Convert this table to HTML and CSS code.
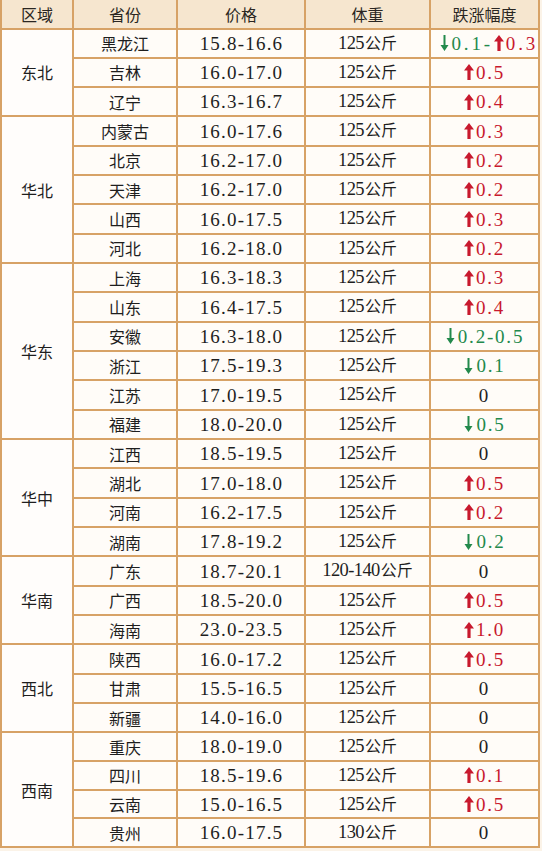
FILE: index.html
```html
<!DOCTYPE html>
<html lang="zh-CN">
<head>
<meta charset="utf-8">
<title>生猪价格</title>
<link rel="stylesheet" href="styles.css">
</head>
<body>
<div class="sheet">
  <div class="cell head">区域</div>
  <div class="cell head">省份</div>
  <div class="cell head">价格</div>
  <div class="cell head">体重</div>
  <div class="cell head">跌涨幅度</div>

  <div class="cell region span3">东北</div>
  <div class="cell prov">黑龙江</div><div class="cell num">15.8-16.6</div><div class="cell wt"><span class="n">125</span>公斤</div>
  <div class="cell chg wide"><span class="dn"><svg viewBox="0 0 10 16"><path d="M4 0h2v10h3L5 16L1 10h3z"/></svg>0.1-</span><span class="up"><svg viewBox="0 0 10 16"><path d="M5 0L10 6.5H6.6V16H3.4V6.5H0z"/></svg>0.3</span></div>
  <div class="cell prov">吉林</div><div class="cell num">16.0-17.0</div><div class="cell wt"><span class="n">125</span>公斤</div>
  <div class="cell chg"><span class="up"><svg viewBox="0 0 10 16"><path d="M5 0L10 6.5H6.6V16H3.4V6.5H0z"/></svg>0.5</span></div>
  <div class="cell prov">辽宁</div><div class="cell num">16.3-16.7</div><div class="cell wt"><span class="n">125</span>公斤</div>
  <div class="cell chg"><span class="up"><svg viewBox="0 0 10 16"><path d="M5 0L10 6.5H6.6V16H3.4V6.5H0z"/></svg>0.4</span></div>

  <div class="cell region span5">华北</div>
  <div class="cell prov">内蒙古</div><div class="cell num">16.0-17.6</div><div class="cell wt"><span class="n">125</span>公斤</div>
  <div class="cell chg"><span class="up"><svg viewBox="0 0 10 16"><path d="M5 0L10 6.5H6.6V16H3.4V6.5H0z"/></svg>0.3</span></div>
  <div class="cell prov">北京</div><div class="cell num">16.2-17.0</div><div class="cell wt"><span class="n">125</span>公斤</div>
  <div class="cell chg"><span class="up"><svg viewBox="0 0 10 16"><path d="M5 0L10 6.5H6.6V16H3.4V6.5H0z"/></svg>0.2</span></div>
  <div class="cell prov">天津</div><div class="cell num">16.2-17.0</div><div class="cell wt"><span class="n">125</span>公斤</div>
  <div class="cell chg"><span class="up"><svg viewBox="0 0 10 16"><path d="M5 0L10 6.5H6.6V16H3.4V6.5H0z"/></svg>0.2</span></div>
  <div class="cell prov">山西</div><div class="cell num">16.0-17.5</div><div class="cell wt"><span class="n">125</span>公斤</div>
  <div class="cell chg"><span class="up"><svg viewBox="0 0 10 16"><path d="M5 0L10 6.5H6.6V16H3.4V6.5H0z"/></svg>0.3</span></div>
  <div class="cell prov">河北</div><div class="cell num">16.2-18.0</div><div class="cell wt"><span class="n">125</span>公斤</div>
  <div class="cell chg"><span class="up"><svg viewBox="0 0 10 16"><path d="M5 0L10 6.5H6.6V16H3.4V6.5H0z"/></svg>0.2</span></div>

  <div class="cell region span6">华东</div>
  <div class="cell prov">上海</div><div class="cell num">16.3-18.3</div><div class="cell wt"><span class="n">125</span>公斤</div>
  <div class="cell chg"><span class="up"><svg viewBox="0 0 10 16"><path d="M5 0L10 6.5H6.6V16H3.4V6.5H0z"/></svg>0.3</span></div>
  <div class="cell prov">山东</div><div class="cell num">16.4-17.5</div><div class="cell wt"><span class="n">125</span>公斤</div>
  <div class="cell chg"><span class="up"><svg viewBox="0 0 10 16"><path d="M5 0L10 6.5H6.6V16H3.4V6.5H0z"/></svg>0.4</span></div>
  <div class="cell prov">安徽</div><div class="cell num">16.3-18.0</div><div class="cell wt"><span class="n">125</span>公斤</div>
  <div class="cell chg"><span class="dn"><svg viewBox="0 0 10 16"><path d="M4 0h2v10h3L5 16L1 10h3z"/></svg>0.2-0.5</span></div>
  <div class="cell prov">浙江</div><div class="cell num">17.5-19.3</div><div class="cell wt"><span class="n">125</span>公斤</div>
  <div class="cell chg"><span class="dn"><svg viewBox="0 0 10 16"><path d="M4 0h2v10h3L5 16L1 10h3z"/></svg>0.1</span></div>
  <div class="cell prov">江苏</div><div class="cell num">17.0-19.5</div><div class="cell wt"><span class="n">125</span>公斤</div>
  <div class="cell chg"><span class="zero">0</span></div>
  <div class="cell prov">福建</div><div class="cell num">18.0-20.0</div><div class="cell wt"><span class="n">125</span>公斤</div>
  <div class="cell chg"><span class="dn"><svg viewBox="0 0 10 16"><path d="M4 0h2v10h3L5 16L1 10h3z"/></svg>0.5</span></div>

  <div class="cell region span4">华中</div>
  <div class="cell prov">江西</div><div class="cell num">18.5-19.5</div><div class="cell wt"><span class="n">125</span>公斤</div>
  <div class="cell chg"><span class="zero">0</span></div>
  <div class="cell prov">湖北</div><div class="cell num">17.0-18.0</div><div class="cell wt"><span class="n">125</span>公斤</div>
  <div class="cell chg"><span class="up"><svg viewBox="0 0 10 16"><path d="M5 0L10 6.5H6.6V16H3.4V6.5H0z"/></svg>0.5</span></div>
  <div class="cell prov">河南</div><div class="cell num">16.2-17.5</div><div class="cell wt"><span class="n">125</span>公斤</div>
  <div class="cell chg"><span class="up"><svg viewBox="0 0 10 16"><path d="M5 0L10 6.5H6.6V16H3.4V6.5H0z"/></svg>0.2</span></div>
  <div class="cell prov">湖南</div><div class="cell num">17.8-19.2</div><div class="cell wt"><span class="n">125</span>公斤</div>
  <div class="cell chg"><span class="dn"><svg viewBox="0 0 10 16"><path d="M4 0h2v10h3L5 16L1 10h3z"/></svg>0.2</span></div>

  <div class="cell region span3">华南</div>
  <div class="cell prov">广东</div><div class="cell num">18.7-20.1</div><div class="cell wt"><span class="n">120-140</span>公斤</div>
  <div class="cell chg"><span class="zero">0</span></div>
  <div class="cell prov">广西</div><div class="cell num">18.5-20.0</div><div class="cell wt"><span class="n">125</span>公斤</div>
  <div class="cell chg"><span class="up"><svg viewBox="0 0 10 16"><path d="M5 0L10 6.5H6.6V16H3.4V6.5H0z"/></svg>0.5</span></div>
  <div class="cell prov">海南</div><div class="cell num">23.0-23.5</div><div class="cell wt"><span class="n">125</span>公斤</div>
  <div class="cell chg"><span class="up"><svg viewBox="0 0 10 16"><path d="M5 0L10 6.5H6.6V16H3.4V6.5H0z"/></svg>1.0</span></div>

  <div class="cell region span3">西北</div>
  <div class="cell prov">陕西</div><div class="cell num">16.0-17.2</div><div class="cell wt"><span class="n">125</span>公斤</div>
  <div class="cell chg"><span class="up"><svg viewBox="0 0 10 16"><path d="M5 0L10 6.5H6.6V16H3.4V6.5H0z"/></svg>0.5</span></div>
  <div class="cell prov">甘肃</div><div class="cell num">15.5-16.5</div><div class="cell wt"><span class="n">125</span>公斤</div>
  <div class="cell chg"><span class="zero">0</span></div>
  <div class="cell prov">新疆</div><div class="cell num">14.0-16.0</div><div class="cell wt"><span class="n">125</span>公斤</div>
  <div class="cell chg"><span class="zero">0</span></div>

  <div class="cell region span4">西南</div>
  <div class="cell prov">重庆</div><div class="cell num">18.0-19.0</div><div class="cell wt"><span class="n">125</span>公斤</div>
  <div class="cell chg"><span class="zero">0</span></div>
  <div class="cell prov">四川</div><div class="cell num">18.5-19.6</div><div class="cell wt"><span class="n">125</span>公斤</div>
  <div class="cell chg"><span class="up"><svg viewBox="0 0 10 16"><path d="M5 0L10 6.5H6.6V16H3.4V6.5H0z"/></svg>0.1</span></div>
  <div class="cell prov">云南</div><div class="cell num">15.0-16.5</div><div class="cell wt"><span class="n">125</span>公斤</div>
  <div class="cell chg"><span class="up"><svg viewBox="0 0 10 16"><path d="M5 0L10 6.5H6.6V16H3.4V6.5H0z"/></svg>0.5</span></div>
  <div class="cell prov">贵州</div><div class="cell num">16.0-17.5</div><div class="cell wt"><span class="n">130</span>公斤</div>
  <div class="cell chg"><span class="zero">0</span></div>
</div>
</body>
</html>
```

FILE: styles.css
```css
html, body {
  margin: 0;
  padding: 0;
  background: #fbf3e8;
}

.sheet {
  display: grid;
  grid-template-columns: 70px 102px 126px 123px 107px;
  grid-template-rows: 27.5px repeat(24, 27.34px) repeat(4, 26.7px);
  gap: 2px;
  padding: 0 2px 2px 2px;
  width: 536px;
  background: #d7a266;
  color: #1e1e1e;
  font-family: "Noto Sans CJK SC", sans-serif;
  font-size: 16px;
}

.cell {
  display: flex;
  align-items: center;
  justify-content: center;
  background: #fffcf8;
  white-space: nowrap;
  line-height: 1;
}

.head {
  background: #f6e6cf;
  color: #2a2622;
}

.region {
  grid-column: 1;
  background: #fffdfb;
}
.span3 { grid-row: span 3; }
.span4 { grid-row: span 4; }
.span5 { grid-row: span 5; }
.span6 { grid-row: span 6; }

.num {
  font-family: "Liberation Serif", serif;
  font-size: 19px;
  letter-spacing: 1.2px;
  padding-left: 1px;
}

.wt {
  font-family: "Noto Sans CJK SC", sans-serif;
  font-size: 16px;
  align-items: baseline;
  padding-top: 4px;
}
.wt .n {
  font-family: "Liberation Serif", serif;
  font-size: 18.5px;
  letter-spacing: -0.6px;
  margin-right: 1px;
}

.chg {
  font-family: "Liberation Serif", serif;
  font-size: 19px;
  letter-spacing: 1.8px;
}
.chg.wide {
  justify-content: flex-end;
  padding-right: 0;
  letter-spacing: 2.8px;
}

.chg svg {
  width: 10px;
  height: 16px;
  margin-right: 2px;
  fill: currentColor;
}

.up, .dn {
  display: inline-flex;
  align-items: center;
}
.up { color: #c8192e; }
.dn { color: #23894c; }
.dn svg { width: 11px; }
.wide .up { margin-left: 1px; }
.zero { color: #1e1e1e; }
```
